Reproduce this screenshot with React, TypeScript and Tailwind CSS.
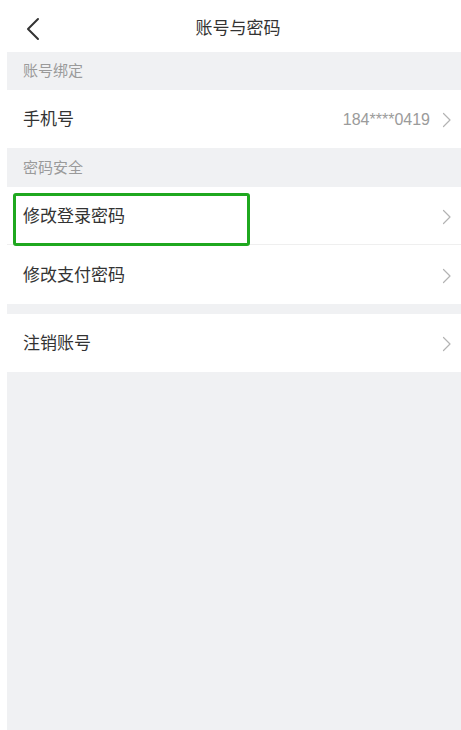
const font = { fontFamily: '"Liberation Sans", "Noto Sans CJK SC", sans-serif' };

function Chevron() {
  return (
    <svg width="10" height="16" viewBox="0 0 10 16" fill="none">
      <path d="M1.5 1.5 L8 8 L1.5 14.5" stroke="#b3b3b3" strokeWidth="1.2" strokeLinecap="round" strokeLinejoin="round" />
    </svg>
  );
}

function SectionLabel({ text, h }: { text: string; h: string }) {
  return (
    <div className={`${h} bg-[#f0f1f3] flex items-center pl-[16px] pt-[1px] text-[15px] text-[#9a9a9a]`}>
      {text}
    </div>
  );
}

function Row({ label, value, h, border }: { label: string; value?: string; h: string; border?: boolean }) {
  return (
    <div className={`${h} bg-white flex items-center pl-[16px] pr-[9px] pt-[2px] ${border ? 'border-b border-[#efefef]' : ''}`}>
      <span className="flex-1 text-[17px] text-[#333]">{label}</span>
      {value && <span className="text-[16px] text-[#9b9b9b] mr-[12px]">{value}</span>}
      <Chevron />
    </div>
  );
}

export default function App() {
  return (
    <div className="w-[461px] h-[730px] bg-white flex flex-col" style={font}>
      {/* шапка */}
      <div className="h-[52px] pt-[5px] flex items-center shrink-0">
        <div className="w-[76px] pl-[25px] flex items-center">
          <svg width="16" height="24" viewBox="0 0 16 24" fill="none">
            <path d="M13 2 L3 12 L13 22" stroke="#333" strokeWidth="2" strokeLinecap="round" strokeLinejoin="round" />
          </svg>
        </div>
        <div className="flex-1 text-center text-[17px] text-[#333]">账号与密码</div>
        <div className="w-[61px]" />
      </div>

      <div className="flex-1 ml-[7px] bg-[#f0f1f3] flex flex-col">
        <SectionLabel text="账号绑定" h="h-[38px]" />
        <Row label="手机号" value="184****0419" h="h-[58px]" />
        <SectionLabel text="密码安全" h="h-[39px]" />
        <div className="relative">
          <Row label="修改登录密码" h="h-[58px]" border />
          {/* выделение */}
          <div className="absolute left-[6px] top-[6px] w-[237px] h-[53px] border-[3px] border-[#1fa81f] rounded-[3px]" />
        </div>
        <Row label="修改支付密码" h="h-[59px]" />
        <div className="h-[10px]" />
        <Row label="注销账号" h="h-[58px]" />
      </div>
    </div>
  );
}
